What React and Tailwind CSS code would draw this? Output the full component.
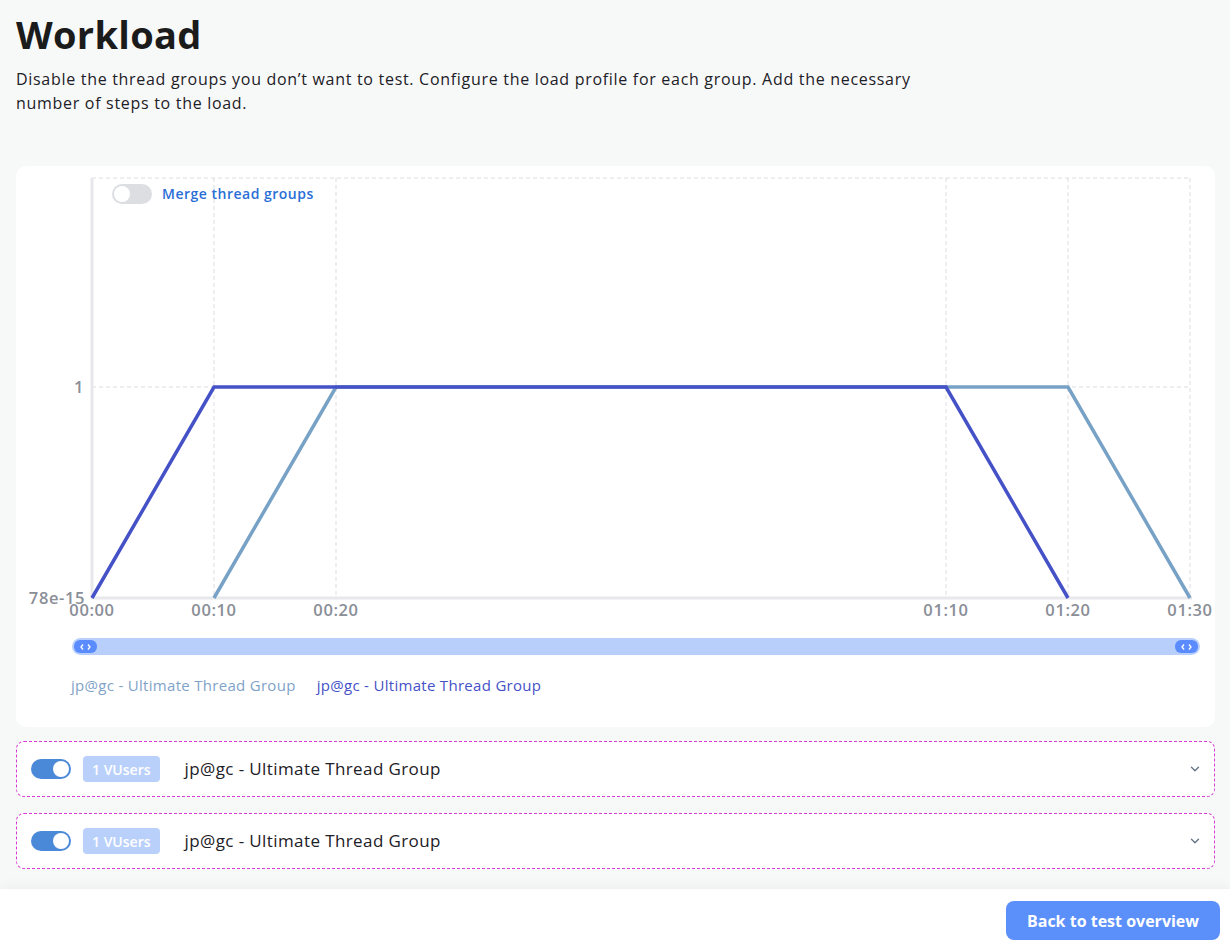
import React from 'react';
import { ChevronDown } from 'lucide-react';

const font = { fontFamily: '"Open Sans", "Liberation Sans", sans-serif' };

const ticks = [
  { x: 76, label: '00:00' },
  { x: 198, label: '00:10' },
  { x: 320, label: '00:20' },
  { x: 930, label: '01:10' },
  { x: 1052, label: '01:20' },
  { x: 1174, label: '01:30' },
];

const Chart = () => (
  <svg width="1199" height="460" className="block">
    {/* grid */}
    <line x1="76" y1="12" x2="1174" y2="12" stroke="#dcdde0" strokeWidth="1" strokeDasharray="4 3" />
    <line x1="76" y1="221" x2="1174" y2="221" stroke="#dcdde0" strokeWidth="1" strokeDasharray="4 3" />
    {ticks.slice(1).map((t) => (
      <line key={t.x} x1={t.x} y1="12" x2={t.x} y2="432" stroke="#dcdde0" strokeWidth="1" strokeDasharray="4 3" />
    ))}
    {/* axes */}
    <line x1="76" y1="12" x2="76" y2="433" stroke="#e7e8ec" strokeWidth="3" />
    <line x1="75" y1="432" x2="1176" y2="432" stroke="#e7e8ec" strokeWidth="3" />
    {/* series */}
    <polyline points="198,432 320,221 1052,221 1174,432" fill="none" stroke="#77a2c6" strokeWidth="3.5" />
    <polyline points="76,432 198,221 930,221 1052,432" fill="none" stroke="#4551c7" strokeWidth="3.5" />
    {/* labels */}
    <g fill="#8a8e97" fontSize="16.5" fontWeight="600" letterSpacing="0.6" style={font}>
      <text x="68" y="227" textAnchor="end">1</text>
      <text x="69" y="438" textAnchor="end">78e-15</text>
      {ticks.map((t) => (
        <text key={t.label} x={t.x} y="450" textAnchor="middle">{t.label}</text>
      ))}
    </g>
  </svg>
);

const Handle = () => (
  <div className="w-[23px] h-[13px] rounded-[6px] bg-[#5b8cff] flex items-center justify-center gap-[3px]">
    <svg width="4" height="6" viewBox="0 0 4 6"><path d="M3 0.5 L1 3 L3 5.5" fill="none" stroke="#fff" strokeWidth="1.3" /></svg>
    <svg width="4" height="6" viewBox="0 0 4 6"><path d="M1 0.5 L3 3 L1 5.5" fill="none" stroke="#fff" strokeWidth="1.3" /></svg>
  </div>
);

const GroupRow = () => (
  <div className="h-[56px] bg-white border border-dashed border-[#d63bd6] rounded-[8px] flex items-center pl-[14px] pr-[12px]">
    <div className="w-[40px] h-[20px] rounded-full bg-[#4a88d8] flex items-center justify-end pr-[2px]">
      <div className="w-[16px] h-[16px] rounded-full bg-white" />
    </div>
    <div className="ml-[12px] h-[26px] px-[9px] rounded-[4px] bg-[#b9d0fb] text-white text-[14px] font-semibold flex items-center">1 VUsers</div>
    <div className="ml-[25px] text-[17px] tracking-[0.4px] text-[#1d2026]">jp@gc - Ultimate Thread Group</div>
    <ChevronDown size={14} strokeWidth={2.5} className="ml-auto text-[#6b7a8c]" />
  </div>
);

export default function App() {
  return (
    <div className="h-[952px] flex flex-col bg-[#f7f9f9] overflow-hidden" style={font}>
      <main className="flex-1 px-4 pt-[10px]">
        <h1 className="text-[38px] leading-[48px] font-bold tracking-[0.3px] text-[#1b1b1b]">Workload</h1>
        <p className="mt-[9px] max-w-[930px] text-[16px] leading-[24px] tracking-[0.7px] text-[#1d2026]">
          Disable the thread groups you don’t want to test. Configure the load profile for each group. Add the necessary number of steps to the load.
        </p>

        <div className="mt-[51px] w-[1199px] bg-white rounded-[10px] relative pb-[32px]">
          <Chart />
          <div className="absolute left-[96px] top-[17px] flex items-center gap-[10px]">
            <div className="w-[40px] h-[20px] rounded-full bg-[#dcdee2] flex items-center pl-[2px]">
              <div className="w-[16px] h-[16px] rounded-full bg-white" />
            </div>
            <span className="text-[14px] font-semibold tracking-[0.5px] text-[#2a6fd6]">Merge thread groups</span>
          </div>
          <div className="mt-[12px] ml-[56px] w-[1128px] h-[17px] rounded-full bg-[#b9cffb] flex items-center justify-between px-[2px]">
            <Handle />
            <Handle />
          </div>
          <div className="mt-[20px] ml-[55px] flex gap-[21px] text-[15px] leading-[20px] tracking-[0.3px]">
            <span className="text-[#7fa3c8]">jp@gc - Ultimate Thread Group</span>
            <span className="text-[#4551c7]">jp@gc - Ultimate Thread Group</span>
          </div>
        </div>

        <div className="mt-[14px] w-[1199px] flex flex-col gap-[16px]">
          <GroupRow />
          <GroupRow />
        </div>
      </main>
      <footer className="h-[63px] shrink-0 bg-white shadow-[0_-4px_10px_rgba(0,0,0,0.04)] flex items-center justify-end pr-[10px]">
        <button className="w-[214px] h-[39px] rounded-[8px] bg-[#5b8ffa] text-white text-[16px] font-bold">Back to test overview</button>
      </footer>
    </div>
  );
}
